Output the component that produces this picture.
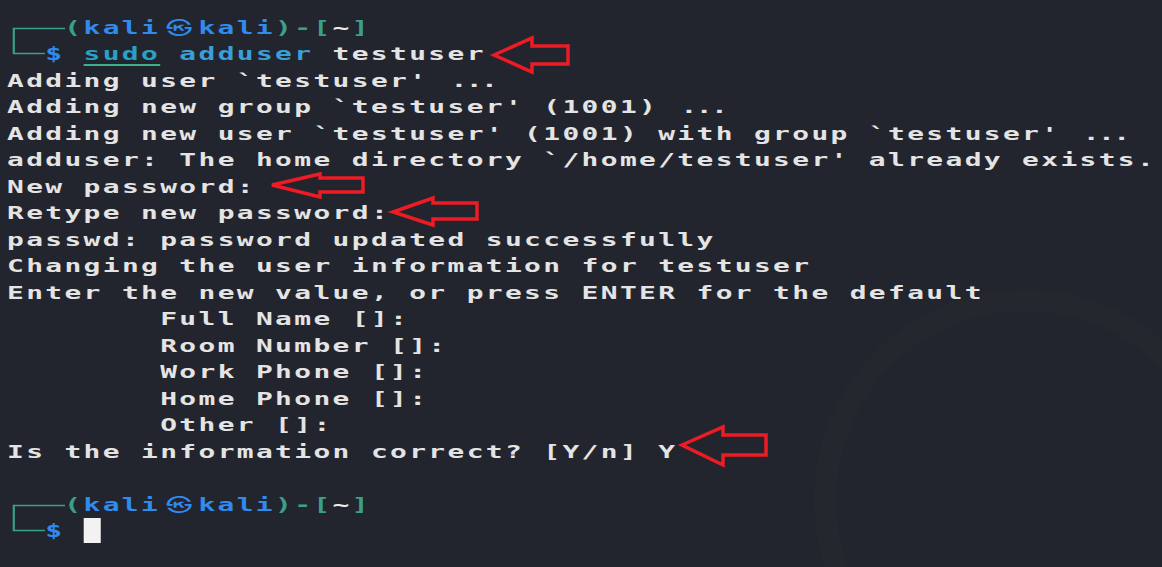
import React from 'react'

const mono = { fontFamily: '"DejaVu Sans Mono", "Noto Sans CJK KR", monospace' }

// [text, ends with "..."]
const output: [string, boolean][] = [
  ["Adding user `testuser' ", true],
  ["Adding new group `testuser' (1001) ", true],
  ["Adding new user `testuser' (1001) with group `testuser' ", true],
  ["adduser: The home directory `/home/testuser' already exists.", false],
  ['New password:', false],
  ['Retype new password:', false],
  ['passwd: password updated successfully', false],
  ['Changing the user information for testuser', false],
  ['Enter the new value, or press ENTER for the default', false],
  ['        Full Name []:', false],
  ['        Room Number []:', false],
  ['        Work Phone []:', false],
  ['        Home Phone []:', false],
  ['        Other []:', false],
  ['Is the information correct? [Y/n] Y', false],
]

// corner pieces of the zsh two-line prompt
const TopCorner = () => (
  <span className="inline-block w-[37px] h-[26.5px] align-top">
    <svg className="block" width="37" height="26.5" viewBox="0 0 37 26.5">
      <path d="M3.9 26.5 V13.5 H37" stroke="#3aa089" strokeWidth="1.4" fill="none" />
    </svg>
  </span>
)

const BottomCorner = () => (
  <span className="inline-block w-[24.7px] h-[26.5px] align-top">
    <svg className="block" width="24.7" height="26.5" viewBox="0 0 24.7 26.5">
      <path d="M3.9 0 V12.5 H24.7" stroke="#3aa089" strokeWidth="1.4" fill="none" />
    </svg>
  </span>
)

const PromptTop = () => (
  <div>
    <TopCorner />
    <span className="text-[#3aa089]">(</span>
    <span className="text-[#2f8bee]">kali</span>
    <span className="inline-block w-[24.7px] text-center tracking-normal text-[#2f8bee] text-[17px] align-top">㉿</span>
    <span className="text-[#2f8bee]">kali</span>
    <span className="text-[#3aa089]">)-[</span>
    <span className="text-[#ececec]">~</span>
    <span className="text-[#3aa089]">]</span>
  </div>
)

const Arrow = ({ d }: { d: string }) => (
  <path d={d} fill="none" stroke="#ec1b24" strokeWidth="3.5" strokeLinejoin="miter" />
)

export default function App() {
  return (
    <div className="relative w-[1162px] h-[567px] overflow-hidden bg-[#23252e]">
      {/* faint wallpaper ring */}
      <svg className="absolute inset-0 pointer-events-none" width="1162" height="567">
        <circle cx="1025" cy="500" r="200" fill="none" stroke="#25272f" strokeWidth="22" />
      </svg>

      <div
        className="relative pt-[14.5px] pl-[4.5px] origin-top-left scale-x-[1.55] font-bold text-[18px] leading-[26.5px] tracking-[1.52px] whitespace-pre text-[#e4e4e4]"
        style={mono}
      >
        <PromptTop />
        <div>
          <BottomCorner />
          <span className="text-[#2f8bee]">$</span>{' '}
          <span className="text-[#2aa0c4] underline decoration-[#3cb08c] decoration-[1.5px] underline-offset-[4px]">sudo</span>{' '}
          <span className="text-[#3a9fd8]">adduser</span> testuser
        </div>
        {output.map(([line, dots], i) => (
          <div key={i}>
            {line}
            {dots && <span className="ml-[2px] tracking-[-1px]">...</span>}
          </div>
        ))}
        <div>{' '}</div>
        <PromptTop />
        <div>
          <BottomCorner />
          <span className="text-[#2f8bee]">$</span>{' '}
          <span className="inline-block w-[11px] h-[25px] align-[-6px] bg-[#f2f2f2]" />
        </div>
      </div>

      {/* annotation arrows */}
      <svg className="absolute inset-0 pointer-events-none" width="1162" height="567">
        <Arrow d="M494 55 L532 38 L532 46 L568 46 L568 64 L532 64 L532 72 Z" />
        <Arrow d="M272 185 L320 174 L320 178 L363 178 L363 192 L320 192 L320 197 Z" />
        <Arrow d="M393 212 L433 198 L433 203 L477 203 L477 219 L433 219 L433 225 Z" />
        <Arrow d="M682 445 L723 427 L723 435 L766 435 L766 455 L723 455 L723 465 Z" />
      </svg>
    </div>
  )
}
